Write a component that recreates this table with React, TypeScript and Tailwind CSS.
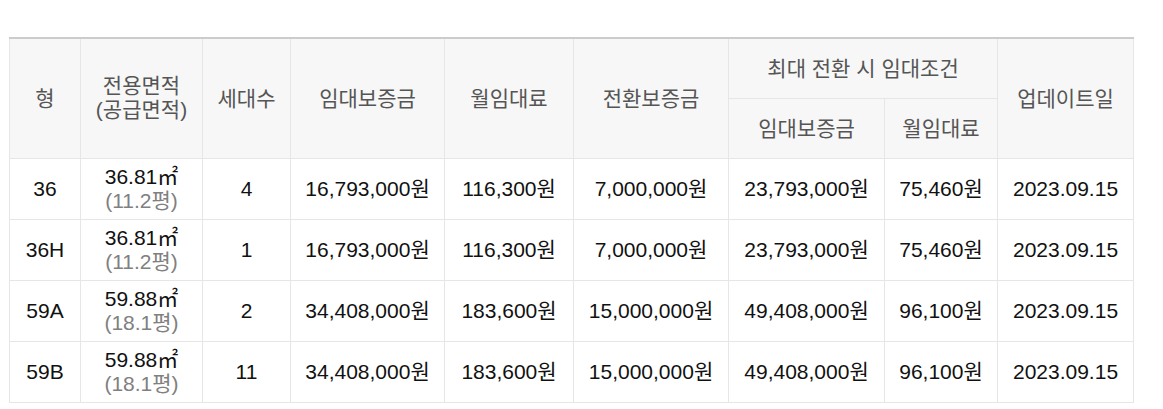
import React from "react";

const rows = [
  { t: "36", a: "36.81", p: "11.2", n: "4", d: "16,793,000원", m: "116,300원", c: "7,000,000원", md: "23,793,000원", mm: "75,460원", u: "2023.09.15" },
  { t: "36H", a: "36.81", p: "11.2", n: "1", d: "16,793,000원", m: "116,300원", c: "7,000,000원", md: "23,793,000원", mm: "75,460원", u: "2023.09.15" },
  { t: "59A", a: "59.88", p: "18.1", n: "2", d: "34,408,000원", m: "183,600원", c: "15,000,000원", md: "49,408,000원", mm: "96,100원", u: "2023.09.15" },
  { t: "59B", a: "59.88", p: "18.1", n: "11", d: "34,408,000원", m: "183,600원", c: "15,000,000원", md: "49,408,000원", mm: "96,100원", u: "2023.09.15" },
];

const th = "border border-[#e6e6e6] bg-[#f7f7f7] font-normal text-[#555] text-center align-middle";
const td = "border border-[#e6e6e6] text-center align-middle text-[#111] h-[61px]";

export default function App() {
  return (
    <div
      className="bg-white w-[1163px] h-[409px] pt-[37px] pl-[9px]"
      style={{ fontFamily: '"Liberation Sans", "Noto Sans CJK KR", Arial, sans-serif' }}
    >
      <table className="border-collapse table-fixed w-[1124px] text-[21px] leading-[25px] border-t-2 border-t-[#cccccc]">
        <colgroup>
          <col className="w-[71px]" />
          <col className="w-[122px]" />
          <col className="w-[88px]" />
          <col className="w-[154px]" />
          <col className="w-[129px]" />
          <col className="w-[155px]" />
          <col className="w-[156px]" />
          <col className="w-[113px]" />
          <col className="w-[136px]" />
        </colgroup>
        <thead>
          <tr className="h-[60px]">
            <th rowSpan={2} className={th + " border-t-2 border-t-[#cccccc]"}>형</th>
            <th rowSpan={2} className={th + " border-t-2 border-t-[#cccccc] leading-[24px]"}>
              전용면적
              <br />
              (공급면적)
            </th>
            <th rowSpan={2} className={th + " border-t-2 border-t-[#cccccc]"}>세대수</th>
            <th rowSpan={2} className={th + " border-t-2 border-t-[#cccccc]"}>임대보증금</th>
            <th rowSpan={2} className={th + " border-t-2 border-t-[#cccccc]"}>월임대료</th>
            <th rowSpan={2} className={th + " border-t-2 border-t-[#cccccc]"}>전환보증금</th>
            <th colSpan={2} className={th + " border-t-2 border-t-[#cccccc]"}>최대 전환 시 임대조건</th>
            <th rowSpan={2} className={th + " border-t-2 border-t-[#cccccc]"}>업데이트일</th>
          </tr>
          <tr className="h-[60px]">
            <th className={th}>임대보증금</th>
            <th className={th}>월임대료</th>
          </tr>
        </thead>
        <tbody className="text-[21px]">
          {rows.map((r) => (
            <tr key={r.t}>
              <td className={td}>{r.t}</td>
              <td className={td}>
                <div className="leading-[24px]">{r.a}㎡</div>
                <div className="leading-[24px] text-[#808080]">({r.p}평)</div>
              </td>
              <td className={td}>{r.n}</td>
              <td className={td}>{r.d}</td>
              <td className={td}>{r.m}</td>
              <td className={td}>{r.c}</td>
              <td className={td}>{r.md}</td>
              <td className={td}>{r.mm}</td>
              <td className={td}>{r.u}</td>
            </tr>
          ))}
        </tbody>
      </table>
    </div>
  );
}
